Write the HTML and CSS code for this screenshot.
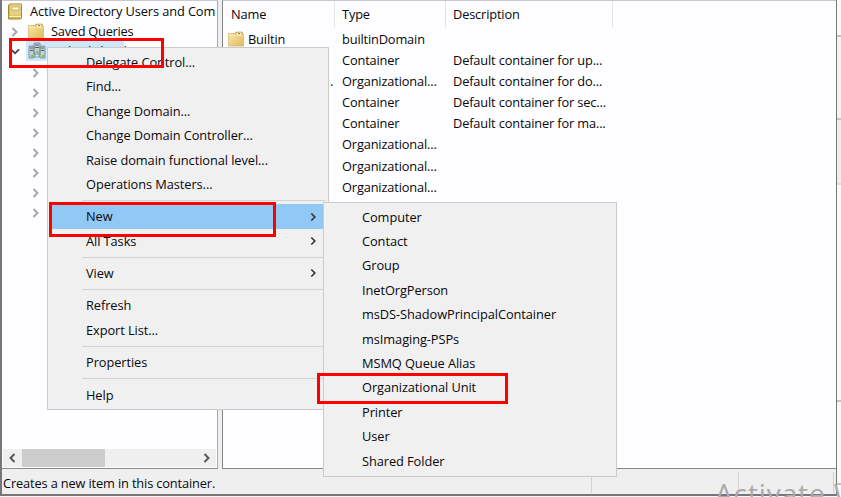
FILE: index.html
```html
<!DOCTYPE html>
<html lang="en">
<head>
<meta charset="utf-8">
<title>Active Directory Users and Computers</title>
<link rel="stylesheet" href="styles.css">
</head>
<body>
<svg class="defs" width="0" height="0" aria-hidden="true">
  <defs>
    <linearGradient id="gold" x1="0" y1="0" x2="1" y2="1"><stop offset="0" stop-color="#fbe9a9"/><stop offset="1" stop-color="#dfbb5c"/></linearGradient>
    <symbol id="folder" viewBox="0 0 16 16"><path d="M.5 2.500h7V1h7v2h1v12H.5z" fill="url(#gold)" stroke="#cfb264" stroke-width=".7"/><path d="M8 1.500h6v2.500H8z" fill="#fff6d5" stroke="#bd9c4b" stroke-width=".6"/><path d="M10 2.500h2" stroke="#a99455"/><path d="M1 4.500h14" stroke="#f8e7ac"/></symbol>
    <symbol id="chev" viewBox="0 0 8 10"><path d="M1.500 1l4 4-4 4" fill="none" stroke="currentColor" stroke-width="1.900"/></symbol>
  </defs>
</svg>
<main class="screen">
  <div class="window">
    <div class="panes">
      <section class="tree">
        <div class="node root">
          <svg class="book" viewBox="0 0 14 16"><path d="M.5 1.500 2 .5h11.500v14l-1 1H.5z" fill="#d5b956" stroke="#a18a3c"/><path d="M2 1h11v11H2z" fill="#e6d27e"/><path d="M4 3.500h7v3H4z" fill="#fffbe2" stroke="#b69a48" stroke-width=".6"/><path d="M1 13h12" stroke="#fff3bd"/></svg>
          <span>Active Directory Users and Com</span>
        </div>
        <div class="node saved"><svg class="chev"><use href="#chev"/></svg><svg class="folder"><use href="#folder"/></svg><span>Saved Queries</span></div>
        <div class="node domain">
          <svg class="check" viewBox="0 0 10 8"><path d="M1 2l3.500 3.500L9 1" fill="none" stroke="#444" stroke-width="2"/></svg>
          <div class="picked">
            <svg class="servers" viewBox="0 0 18 18"><path d="M6 1h6v11H6zM1 4h5v12H1zM12 4h5v12h-5z" fill="#c6d0d5" stroke="#71838b" stroke-width=".8"/><path d="M7 3h4M7 5.500h4M2 6h3M2 8.500h3M13 6h3M13 8.500h3" stroke="#4c6069"/><path d="M7 12v3M11 12v3M6 15h6" stroke="#879ba2" fill="none"/><path d="M3 13h2v2H3zM14 13h2v2h-2zM8.500 9h2v2h-2z" fill="#58c83c"/></svg>
            <span>vinhndc.local</span>
          </div>
        </div>
        <div class="node child"><svg class="chev"><use href="#chev"/></svg></div>
        <div class="node child"><svg class="chev"><use href="#chev"/></svg></div>
        <div class="node child"><svg class="chev"><use href="#chev"/></svg></div>
        <div class="node child"><svg class="chev"><use href="#chev"/></svg></div>
        <div class="node child"><svg class="chev"><use href="#chev"/></svg></div>
        <div class="node child"><svg class="chev"><use href="#chev"/></svg></div>
        <div class="node child"><svg class="chev"><use href="#chev"/></svg></div>
        <div class="node child"><svg class="chev"><use href="#chev"/></svg></div>
        <div class="scrollbar"><svg class="chev flip"><use href="#chev"/></svg><div class="thumb"></div><svg class="chev"><use href="#chev"/></svg></div>
      </section>
      <section class="list">
        <div class="row head"><span>Name</span><span>Type</span><span>Description</span></div>
        <div class="row"><span class="name"><svg class="folder"><use href="#folder"/></svg>Builtin</span><span>builtinDomain</span><span></span></div>
        <div class="row"><span></span><span>Container</span><span>Default container for up...</span></div>
        <div class="row"><span class="more">.</span><span>Organizational...</span><span>Default container for do...</span></div>
        <div class="row"><span></span><span>Container</span><span>Default container for sec...</span></div>
        <div class="row"><span></span><span>Container</span><span>Default container for ma...</span></div>
        <div class="row"><span></span><span>Organizational...</span><span></span></div>
        <div class="row"><span></span><span>Organizational...</span><span></span></div>
        <div class="row"><span></span><span>Organizational...</span><span></span></div>
      </section>
    </div>
    <footer class="status"><span class="message">Creates a new item in this container.</span><i></i><i></i><i></i></footer>
  </div>
  <aside class="backdrop"><i></i><i></i><i></i><i></i><i></i></aside>
  <div class="watermark">Activate W</div>

  <div class="menu context">
    <div class="item">Delegate Control...</div>
    <div class="item">Find...</div>
    <div class="item">Change Domain...</div>
    <div class="item">Change Domain Controller...</div>
    <div class="item">Raise domain functional level...</div>
    <div class="item">Operations Masters...</div>
    <hr>
    <div class="item active">New<svg class="chev"><use href="#chev"/></svg></div>
    <div class="item">All Tasks<svg class="chev"><use href="#chev"/></svg></div>
    <hr>
    <div class="item">View<svg class="chev"><use href="#chev"/></svg></div>
    <hr>
    <div class="item">Refresh</div>
    <div class="item">Export List...</div>
    <hr>
    <div class="item">Properties</div>
    <hr>
    <div class="item">Help</div>
  </div>
  <div class="menu submenu">
    <div class="item">Computer</div>
    <div class="item">Contact</div>
    <div class="item">Group</div>
    <div class="item">InetOrgPerson</div>
    <div class="item">msDS-ShadowPrincipalContainer</div>
    <div class="item">msImaging-PSPs</div>
    <div class="item">MSMQ Queue Alias</div>
    <div class="item">Organizational Unit</div>
    <div class="item">Printer</div>
    <div class="item">User</div>
    <div class="item">Shared Folder</div>
  </div>
  <div class="mark mark-domain"></div>
  <div class="mark mark-new"></div>
  <div class="mark mark-unit"></div>
</main>
</body>
</html>
```

FILE: styles.css
```css
* { box-sizing: border-box; }
body { margin: 0; overflow: hidden; }
.defs { position: absolute; }
.screen { position: relative; display: flex; width: 841px; height: 497px; overflow: hidden; background: #fafafa; font: 12.8px/20px "Open Sans", "Noto Sans", sans-serif; letter-spacing: -.15px; color: #08080c; white-space: nowrap; }
.window { width: 837px; height: 496px; display: flex; flex-direction: column; background: #f0eff0; border: solid #77777b; border-width: 0 1px 2px 2px; }
.panes { height: 469px; display: flex; gap: 4px; }
.tree, .list { background: #fefdff; border-top: 1px solid #c8c7c9; border-bottom: 1px solid #8a888b; overflow: hidden; }
.tree { width: 216px; border-right: 1px solid #aaa8aa; display: flex; flex-direction: column; }
.list { flex: 1; border-left: 1px solid #858386; }
.node { height: 20px; flex: none; display: flex; align-items: center; }
.root { padding-left: 6px; gap: 8px; letter-spacing: -.1px; }
.book { width: 14px; height: 17px; flex: none; }
.chev { width: 8px; height: 10px; color: #a5a5a5; flex: none; }
.saved { padding-left: 9px; }
.saved .chev { margin-top: 2px; }
.folder { width: 16px; height: 16px; flex: none; }
.saved .folder { margin: 0 7px 0 9px; }
.saved span { letter-spacing: -.25px; }
.domain { padding-left: 9px; }
.check { width: 9px; height: 8px; margin-top: 2px; }
.picked { height: 20px; width: 98px; margin-left: 6px; padding-left: 2px; display: flex; align-items: center; gap: 5px; background: #cce8ff; }
.servers { width: 18px; height: 18px; flex: none; }
.child { padding: 3px 0 0 30px; }
.scrollbar { height: 18px; margin: auto 1px 1px; background: #f0eff0; display: flex; align-items: center; padding: 0 5px; flex: none; }
.scrollbar .chev { color: #555; }
.flip { transform: scaleX(-1); }
.thumb { width: 83px; height: 18px; margin: 0 auto 0 6px; background: #cdcccd; }
.row { display: grid; grid-template-columns: 111px 111px 159px; height: 21.2px; align-items: center; padding-left: 8px; }
.head { height: 27px; margin-bottom: -.1px; align-items: stretch; line-height: 27px; padding-left: 0; }
.head { grid-template-columns: 112px 111px 167px; }
.head span { border-right: 1px solid #e4e3e5; padding-left: 8px; }
.head span + span { padding-left: 7px; }
.name { display: flex; align-items: center; gap: 4px; margin-left: -3px; }
.more { padding-left: 99px; }
.status { height: 25px; display: flex; line-height: 28px; letter-spacing: -.14px; }
.message { width: 589px; padding-left: 1px; }
.status i { width: 147px; border-left: 1px solid #d4d2d4; margin: 3px 0 1px; }
.status i:nth-of-type(2) { width: 95px; }
.status i:last-child { width: 1px; }
.backdrop { width: 4px; }
.backdrop i { display: block; border-bottom: 2px solid #c5c4c5; height: 37px; }
.backdrop i:nth-child(2) { height: 83px; background: #f5f4f5; }
.backdrop i:nth-child(3) { height: 65px; background: #efeeef; border-color: #e2e1e2; }
.backdrop i:nth-child(4) { height: 217px; }
.backdrop i:nth-child(5) { height: 83px; }
.watermark { position: absolute; left: 715px; top: 478px; font-size: 28px; line-height: 30px; letter-spacing: .9px; color: #aaaaac; }
.menu { position: absolute; background: #f1f0f1; border: 1px solid #cccbcc; padding: 2px 2px; letter-spacing: -.07px; }
.context { left: 47px; top: 47px; width: 282px; height: 363px; }
.submenu { left: 323px; top: 202px; width: 294px; height: 275px; padding-top: 1.6px; }
.item { height: 24.4px; line-height: 24.4px; padding: 0 9px 0 36px; display: flex; align-items: center; justify-content: space-between; }
.item .chev { color: #333; width: 7px; height: 10px; }
.active { background: #91c8f6; }
hr { height: 1px; border: 0; background: #d5d4d5; margin: 3.6px 0 3.4px 32px; }
.mark { position: absolute; border: 3px solid #f00; }
.mark-domain { left: 9px; top: 38px; width: 155px; height: 30px; }
.mark-new { left: 49px; top: 202px; width: 227px; height: 35px; }
.mark-unit { left: 317px; top: 373px; width: 191px; height: 31px; }
```
